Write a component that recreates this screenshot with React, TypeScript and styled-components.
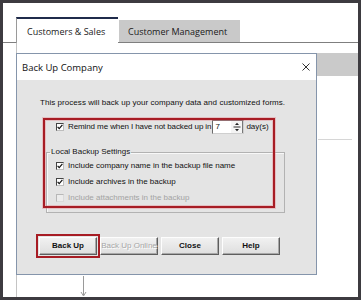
import styled, { createGlobalStyle } from 'styled-components';

const GlobalStyle = createGlobalStyle`
  html, body {
    margin: 0;
    padding: 0;
    background: #fff;
  }
  body {
    font-family: "Liberation Sans", Arial, sans-serif;
  }
`;

const Frame = styled.div`
  width: 361px;
  height: 300px;
  box-sizing: border-box;
  border: 3px solid #3d3b40;
  background: #fff;
  display: flex;
  flex-direction: column;
  overflow: hidden;
`;

const TabStrip = styled.div`
  flex: none;
  height: 39px;
  display: flex;
  align-items: flex-end;
  padding-left: 13px;
  border-bottom: 1px solid #7f7f7f;
`;

const Tab = styled.div<{ $active?: boolean }>`
  box-sizing: border-box;
  display: flex;
  align-items: center;
  height: ${(p) => (p.$active ? 26 : 22)}px;
  margin-bottom: ${(p) => (p.$active ? -1 : 0)}px;
  margin-left: ${(p) => (p.$active ? 0 : 1)}px;
  width: ${(p) => (p.$active ? 102 : 121)}px;
  padding: ${(p) => (p.$active ? '0 0 0 10px' : '0 0 0 9px')};
  background: ${(p) => (p.$active ? '#fff' : '#c9c9c9')};
  border-top: ${(p) => (p.$active ? '2px solid #1f2b4b' : 'none')};
  border-left: ${(p) => (p.$active ? '1px solid #9a9a9a' : 'none')};
  font-family: "Open Sans", "Noto Sans", sans-serif;
  font-size: 9px;
  color: #1a1a1a;
  white-space: nowrap;
`;

const Workspace = styled.div`
  flex: 1;
  display: flex;
  flex-direction: column;
  margin-left: 13px;
  border-left: 1px solid #c4c4c4;
  padding-top: 10px;
`;

const DialogRow = styled.div`
  display: flex;
`;

const Dialog = styled.div`
  box-sizing: border-box;
  width: 301px;
  height: 222px;
  margin-left: -1px;
  border: 1px solid #8595ab;
  display: flex;
  flex-direction: column;
  background: #fff;
`;

const TitleBar = styled.div`
  flex: none;
  height: 26px;
  display: flex;
  align-items: center;
  justify-content: space-between;
  padding: 0 6px 0 5px;
  font-family: "Open Sans", "Noto Sans", sans-serif;
  font-size: 9.5px;
  color: #111;
`;

const Body = styled.div`
  position: relative;
  flex: 1;
  background: #e4e4e4;
  padding-top: 17px;
  font-size: 8px;
  line-height: 12px;
  color: #111;
`;

const Intro = styled.div`
  margin-left: 23px;
  white-space: nowrap;
  letter-spacing: 0.05px;
`;

const RemindRow = styled.div`
  display: flex;
  align-items: center;
  height: 14px;
  margin: 11px 0 0 39px;
`;

const RemindLabel = styled.span`
  margin: 0 1px 0 4px;
  white-space: nowrap;
  letter-spacing: -0.1px;
`;

const DaysField = styled.div`
  box-sizing: border-box;
  display: flex;
  height: 14px;
  border-top: 1px solid #6b6b6b;
  border-left: 1px solid #6b6b6b;
  border-right: 1px solid #cfcfcf;
  border-bottom: 1px solid #cfcfcf;
`;

const DaysInput = styled.div`
  width: 16px;
  background: #fff;
  padding-left: 2px;
  line-height: 12px;
`;

const Spinner = styled.svg`
  display: block;
  background: #f4f4f4;
`;

const Unit = styled.span`
  margin-left: 2px;
`;

const Group = styled.fieldset`
  box-sizing: border-box;
  width: 239px;
  min-width: 0;
  margin: 12px 0 0 29px;
  padding: 0 0 6px 9px;
  border: 1px solid #b2b2b2;
  box-shadow: inset 1px 1px 0 #f8f8f8;
`;

const Legend = styled.legend`
  margin-left: -6px;
  padding: 0 1px;
  line-height: 12px;
`;

const CheckRow = styled.div<{ $disabled?: boolean }>`
  display: flex;
  align-items: center;
  gap: 4px;
  height: 16px;
  color: ${(p) => (p.$disabled ? '#a3a3a3' : '#111')};
  white-space: nowrap;
`;

const Box = styled.span<{ $disabled?: boolean }>`
  box-sizing: border-box;
  flex: none;
  width: 8px;
  height: 8px;
  display: flex;
  background: ${(p) => (p.$disabled ? '#ececec' : '#fff')};
  border-top: 1px solid ${(p) => (p.$disabled ? '#b8b8b8' : '#444')};
  border-left: 1px solid ${(p) => (p.$disabled ? '#b8b8b8' : '#444')};
  border-right: 1px solid ${(p) => (p.$disabled ? '#dadada' : '#bdbdbd')};
  border-bottom: 1px solid ${(p) => (p.$disabled ? '#dadada' : '#bdbdbd')};
`;

const Buttons = styled.div`
  display: flex;
  gap: 3px;
  margin: 24px 0 0 22px;
`;

const Button = styled.div<{ $disabled?: boolean; $marked?: boolean }>`
  box-sizing: border-box;
  width: 58px;
  height: 18px;
  display: flex;
  align-items: center;
  justify-content: center;
  background: linear-gradient(#f1f1f1, #dedede);
  border-top: 1px solid #fdfdfd;
  border-left: 1px solid #fdfdfd;
  border-right: 1px solid #5e5e5e;
  border-bottom: 1px solid #5e5e5e;
  box-shadow: inset -1px -1px 0 #a8a8a8;
  font-size: 8px;
  font-weight: ${(p) => (p.$disabled ? 400 : 700)};
  color: ${(p) => (p.$disabled ? '#a6a6a6' : '#111')};
  text-shadow: ${(p) => (p.$disabled ? '1px 1px 0 #fff' : 'none')};
  white-space: nowrap;
  outline: ${(p) => (p.$marked ? '2px solid #a71c24' : 'none')};
  outline-offset: 1px;
`;

const Highlight = styled.div`
  position: absolute;
  left: 26px;
  top: 38px;
  width: 232px;
  height: 90px;
  box-sizing: border-box;
  border: 2px solid #a71c24;
  box-shadow: 0 0 0 1px rgba(230, 120, 130, 0.35), inset 0 0 0 1px rgba(230, 120, 130, 0.35);
  pointer-events: none;
`;

const SidePanel = styled.div`
  flex: 1;
  display: flex;
  flex-direction: column;
`;

const SideHeader = styled.div`
  height: 23px;
  background: #cacaca;
`;

const SideRule = styled.div`
  height: 1px;
  margin: 63px 6px 0 1px;
  background: #d6d6d6;
`;

const Connector = styled.svg`
  display: block;
  margin: 1px 0 0 63px;
`;

function Check({ on, disabled }: { on?: boolean; disabled?: boolean }) {
  return (
    <Box $disabled={disabled}>
      {on && (
        <svg width="6" height="6" viewBox="0 0 6 6">
          <path d="M0.6 2.8 L2.2 4.6 L5.4 0.8" fill="none" stroke="#111" strokeWidth="1.2" />
        </svg>
      )}
    </Box>
  );
}

export default function App() {
  return (
    <>
      <GlobalStyle />
      <Frame>
        <TabStrip>
          <Tab $active>Customers &amp; Sales</Tab>
          <Tab>Customer Management</Tab>
        </TabStrip>
        <Workspace>
          <DialogRow>
            <Dialog>
              <TitleBar>
                <span>Back Up Company</span>
                <svg width="8" height="8" viewBox="0 0 8 8">
                  <path d="M0.5 0.5 L7.5 7.5 M7.5 0.5 L0.5 7.5" stroke="#333" strokeWidth="1" />
                </svg>
              </TitleBar>
              <Body>
                <Intro>This process will back up your company data and customized forms.</Intro>
                <RemindRow>
                  <Check on />
                  <RemindLabel>Remind me when I have not backed up in</RemindLabel>
                  <DaysField>
                    <DaysInput>7</DaysInput>
                    <Spinner width="12" height="12" viewBox="0 0 12 12">
                      <path d="M4 4 L6 1.8 L8 4 Z" fill="#222" />
                      <path d="M2.5 6 H9.5" stroke="#333" strokeWidth="1" />
                      <path d="M4 8 L6 10.2 L8 8 Z" fill="#222" />
                      <path d="M11.5 0 V12" stroke="#777" strokeWidth="1" />
                    </Spinner>
                  </DaysField>
                  <Unit>day(s)</Unit>
                </RemindRow>
                <Group>
                  <Legend>Local Backup Settings</Legend>
                  <CheckRow>
                    <Check on />
                    Include company name in the backup file name
                  </CheckRow>
                  <CheckRow>
                    <Check on />
                    Include archives in the backup
                  </CheckRow>
                  <CheckRow $disabled>
                    <Check disabled />
                    Include attachments in the backup
                  </CheckRow>
                </Group>
                <Buttons>
                  <Button $marked>Back Up</Button>
                  <Button $disabled>Back Up Online</Button>
                  <Button>Close</Button>
                  <Button>Help</Button>
                </Buttons>
                <Highlight />
              </Body>
            </Dialog>
            <SidePanel>
              <SideHeader />
              <SideRule />
            </SidePanel>
          </DialogRow>
          <Connector width="7" height="21" viewBox="0 0 7 21">
            <path d="M3.5 0 V19" stroke="#9a9a9a" strokeWidth="1" />
            <path d="M1 16 L3.5 20 L6 16" fill="none" stroke="#9a9a9a" strokeWidth="1" />
          </Connector>
        </Workspace>
      </Frame>
    </>
  );
}
